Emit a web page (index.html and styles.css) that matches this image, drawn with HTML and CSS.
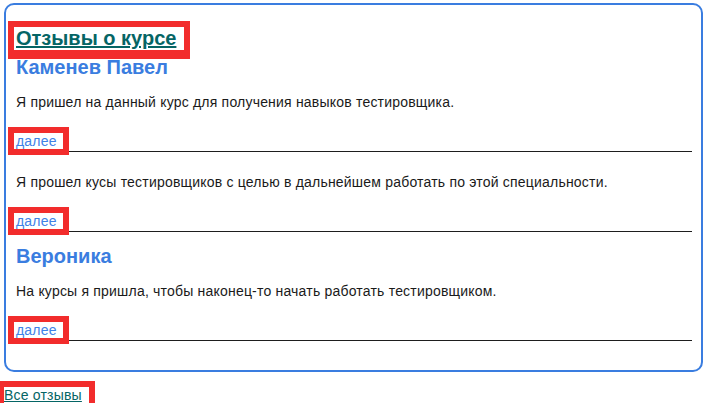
FILE: index.html
```html
<!DOCTYPE html>
<html lang="ru">
<head>
<meta charset="utf-8">
<title>Отзывы о курсе</title>
<link rel="stylesheet" href="styles.css">
</head>
<body>
<div class="page">
  <section class="reviews">
    <h2 class="reviews-title"><a href="#" class="title-link marked">Отзывы о курсе</a></h2>

    <h3 class="author">Каменев Павел</h3>
    <div class="comment">
      <p class="comment-text">Я пришел на данный курс для получения навыков тестировщика.</p>
      <div class="more"><a href="#" class="more-link marked">далее</a></div>
    </div>
    <div class="comment">
      <p class="comment-text">Я прошел кусы тестировщиков с целью в дальнейшем работать по этой специальности.</p>
      <div class="more"><a href="#" class="more-link marked">далее</a></div>
    </div>

    <h3 class="author author-next">Вероника</h3>
    <div class="comment">
      <p class="comment-text">На курсы я пришла, чтобы наконец-то начать работать тестировщиком.</p>
      <div class="more"><a href="#" class="more-link marked">далее</a></div>
    </div>
  </section>
  <div class="all"><a href="#" class="all-link marked">Все отзывы</a></div>
</div>
</body>
</html>
```

FILE: styles.css
```css
html, body {
  margin: 0;
  padding: 0;
  background: #ffffff;
}

body {
  font-family: "Liberation Sans", Arial, sans-serif;
  font-size: 14px;
  color: #1a1a1a;
}

.page {
  padding: 3px 1px 0 4px;
}

.reviews {
  border: 2px solid #3a7de0;
  border-radius: 10px;
  padding: 22px 9px 29px 8px;
}

.marked {
  outline: 6px solid #f22c2c;
}

.reviews-title {
  margin: 0;
  font-size: 20px;
  font-weight: bold;
  line-height: normal;
}

.title-link {
  display: inline-block;
  padding: 0 8px 0 2px;
  color: #056565;
  text-decoration: underline;
  box-shadow: 0 3px 0 6px #f22c2c;
}

.author {
  margin: 6px 0 0 0;
  padding-left: 2px;
  font-size: 20px;
  font-weight: bold;
  line-height: normal;
  color: #3a7de0;
}

.author-next {
  margin-top: 13px;
}

.comment {
  padding-top: 15px;
  border-bottom: 1px solid #1e1e1e;
}

.comment + .comment {
  margin-top: 7px;
}

.comment-text {
  margin: 0;
  padding-left: 2px;
  font-size: 14px;
  line-height: 16px;
  letter-spacing: 0.2px;
}

.more {
  margin-top: 23px;
  padding-bottom: 2px;
  font-size: 14px;
  line-height: normal;
}

.more-link {
  display: inline-block;
  padding: 0 6px 0 2px;
  color: #3f82e6;
  text-decoration: none;
  background: #ffffff;
  letter-spacing: 0.2px;
}

.all {
  margin-top: 15px;
  font-size: 14px;
  line-height: normal;
}

.all-link {
  display: inline-block;
  padding-right: 7px;
  color: #056565;
  text-decoration: underline;
  letter-spacing: 0.2px;
}
```
